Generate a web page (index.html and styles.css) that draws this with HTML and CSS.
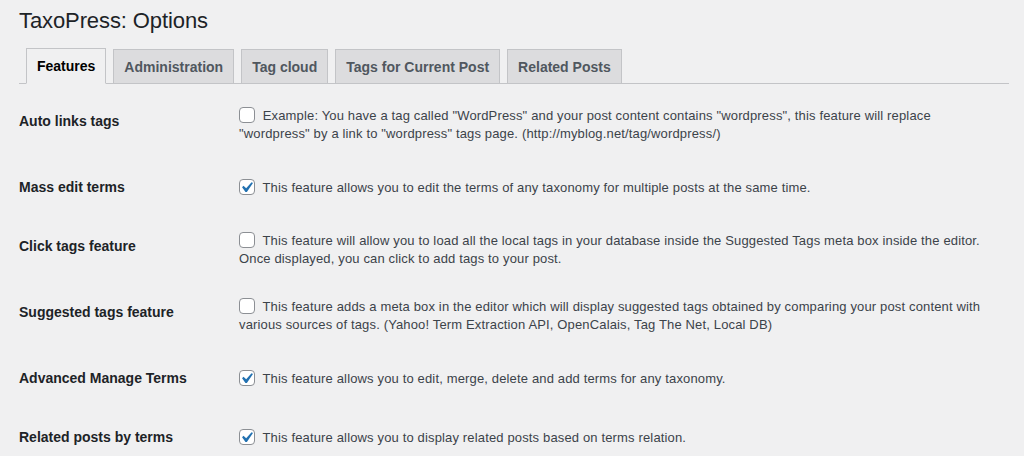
FILE: index.html
```html
<!DOCTYPE html>
<html lang="en">
  <head>
    <meta charset="UTF-8" />
    <title>TaxoPress: Options</title>
    <link rel="stylesheet" href="styles.css">
  </head>
  <body>
    <div class="wrap">
      <h1>TaxoPress: Options</h1>

      <nav class="nav-tab-wrapper">
        <a href="#" class="nav-tab nav-tab-active">Features</a>
        <a href="#" class="nav-tab">Administration</a>
        <a href="#" class="nav-tab">Tag cloud</a>
        <a href="#" class="nav-tab">Tags for Current Post</a>
        <a href="#" class="nav-tab">Related Posts</a>
      </nav>

      <table class="form-table">
        <tr>
          <th>Auto links tags</th>
          <td>
            <label><span class="check"></span> Example: You have a tag called "WordPress" and your post content contains "wordpress", this feature will replace "wordpress" by a link to "wordpress" tags page. (http://myblog.net/tag/wordpress/)</label>
          </td>
        </tr>
        <tr>
          <th>Mass edit terms</th>
          <td>
            <label><span class="check checked"><svg viewBox="0 0 20 20"><path d="M14.83 4.89l1.34.94-5.81 8.38H9.02L5.78 9.67l1.34-1.25 2.57 2.4z"/></svg></span> This feature allows you to edit the terms of any taxonomy for multiple posts at the same time.</label>
          </td>
        </tr>
        <tr>
          <th>Click tags feature</th>
          <td>
            <label><span class="check"></span> This feature will allow you to load all the local tags in your database inside the Suggested Tags meta box inside the editor. Once displayed, you can click to add tags to your post.</label>
          </td>
        </tr>
        <tr>
          <th>Suggested tags feature</th>
          <td>
            <label><span class="check"></span> This feature adds a meta box in the editor which will display suggested tags obtained by comparing your post content with various sources of tags. (Yahoo! Term Extraction API, OpenCalais, Tag The Net, Local DB)</label>
          </td>
        </tr>
        <tr>
          <th>Advanced Manage Terms</th>
          <td>
            <label><span class="check checked"><svg viewBox="0 0 20 20"><path d="M14.83 4.89l1.34.94-5.81 8.38H9.02L5.78 9.67l1.34-1.25 2.57 2.4z"/></svg></span> This feature allows you to edit, merge, delete and add terms for any taxonomy.</label>
          </td>
        </tr>
        <tr>
          <th>Related posts by terms</th>
          <td>
            <label><span class="check checked"><svg viewBox="0 0 20 20"><path d="M14.83 4.89l1.34.94-5.81 8.38H9.02L5.78 9.67l1.34-1.25 2.57 2.4z"/></svg></span> This feature allows you to display related posts based on terms relation.</label>
          </td>
        </tr>
      </table>
    </div>
  </body>
</html>
```

FILE: styles.css
```css
* {
  box-sizing: border-box;
}
html,
body {
  margin: 0;
  height: 100%;
  overflow: hidden;
}
body {
  background-color: #f0f0f1;
  color: #3c434a;
  font-family: "Liberation Sans", Arial, sans-serif;
  font-size: 13px;
}
.wrap {
  padding: 7px 15px 0 19px;
}
h1 {
  margin: 0;
  font-size: 22px;
  line-height: 28px;
  font-weight: 400;
  letter-spacing: -0.1px;
  color: #1d2327;
}
.nav-tab-wrapper {
  display: flex;
  align-items: flex-end;
  margin-top: 13px;
  border-bottom: 1px solid #c3c4c7;
}
.nav-tab {
  margin-left: 7px;
  padding: 5px 10px 4px;
  border: 1px solid #c3c4c7;
  border-bottom: none;
  background-color: #dcdcde;
  color: #50575e;
  font-size: 14px;
  font-weight: 700;
  line-height: 24px;
  text-decoration: none;
}
.nav-tab-active {
  margin-bottom: -1px;
  padding-bottom: 5px;
  border-bottom: 1px solid #f0f0f1;
  background-color: #f0f0f1;
  color: #000;
}
.form-table {
  width: 100%;
  margin-top: 8px;
  border-collapse: collapse;
}
.form-table th {
  width: 210px;
  padding: 20px 10px 20px 0;
  vertical-align: top;
  text-align: left;
  font-size: 14px;
  font-weight: 700;
  line-height: 19px;
  color: #1d2327;
}
.form-table td {
  padding: 15px 10px;
  vertical-align: middle;
  line-height: 18px;
  letter-spacing: 0.15px;
}
.check {
  display: inline-block;
  width: 16px;
  height: 16px;
  margin: -3px 4px 0 0;
  vertical-align: middle;
  border: 1px solid #8c8f94;
  border-radius: 4px;
  background-color: #fff;
  position: relative;
}
.check svg {
  position: absolute;
  left: -4px;
  top: -3px;
  width: 21px;
  height: 21px;
  fill: #2271b1;
}
```
